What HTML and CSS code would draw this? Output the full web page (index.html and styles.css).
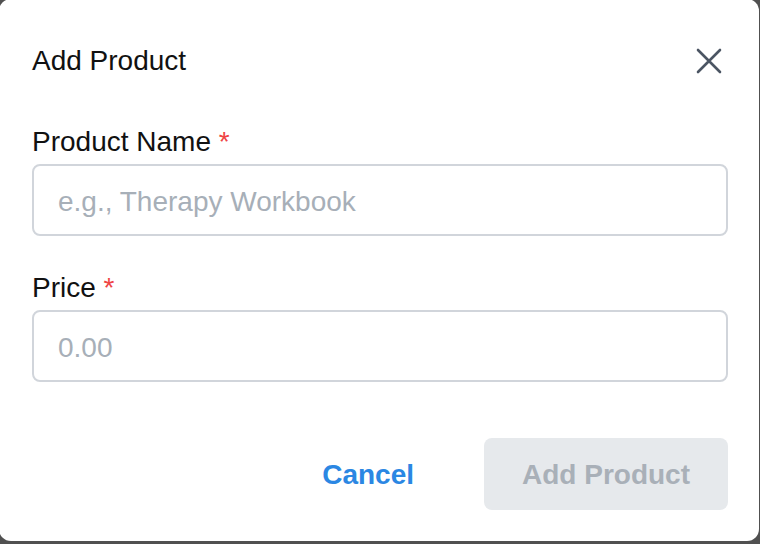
FILE: index.html
```html
<!DOCTYPE html>
<html lang="en">
<head>
<meta charset="utf-8">
<title>Add Product</title>
<link rel="stylesheet" href="styles.css">
</head>
<body>
<div class="modal">
  <div class="modal-header">
    <h2 class="modal-title">Add Product</h2>
    <button class="close-btn" type="button" aria-label="Close">
      <svg width="26" height="26" viewBox="0 0 26 26" fill="none" stroke="#4b5563" stroke-width="2.6" stroke-linecap="round">
        <path d="M2 2 L24 24 M24 2 L2 24"/>
      </svg>
    </button>
  </div>
  <div class="field">
    <label class="field-label">Product Name <span class="req">*</span></label>
    <input class="field-input" type="text" placeholder="e.g., Therapy Workbook">
  </div>
  <div class="field field-second">
    <label class="field-label">Price <span class="req">*</span></label>
    <input class="field-input" type="text" placeholder="0.00">
  </div>
  <div class="actions">
    <button class="btn-cancel" type="button">Cancel</button>
    <button class="btn-submit" type="button" disabled>Add Product</button>
  </div>
</div>
</body>
</html>
```

FILE: styles.css
```css
* { box-sizing: border-box; }
html, body {
  margin: 0;
  padding: 0;
  width: 760px;
  height: 544px;
  overflow: hidden;
  background: #505050;
  font-family: "Liberation Sans", Arial, sans-serif;
}
.modal {
  width: 760px;
  margin: -1px 0 0 -1px;
  background: #ffffff;
  border-radius: 12px;
  padding: 42px 31px 31px 33px;
}
.modal-header {
  display: flex;
  align-items: center;
  justify-content: space-between;
  height: 40px;
}
.modal-title {
  margin: 0;
  font-size: 28px;
  font-weight: 400;
  line-height: 40px;
  color: #111111;
}
.close-btn {
  border: 0;
  background: transparent;
  padding: 6px;
  display: flex;
  cursor: pointer;
}
.field {
  display: flex;
  flex-direction: column;
  margin-top: 38px;
}
.field-second { margin-top: 29px; }
.field-label {
  font-size: 28px;
  line-height: 40px;
  color: #111111;
  padding-top: 3px;
  margin-bottom: 2px;
}
.req { color: #ef4444; }
.field-input {
  height: 72px;
  border: 2px solid #d1d5db;
  border-radius: 8px;
  padding: 4px 24px 0;
  font-family: inherit;
  font-size: 28px;
  color: #111111;
  background: #ffffff;
  outline: none;
}
.field-input::placeholder { color: #a7afb8; }
.actions {
  display: flex;
  justify-content: flex-end;
  align-items: center;
  gap: 46px;
  margin-top: 56px;
}
.btn-cancel {
  border: 0;
  background: transparent;
  padding: 2px 24px 0;
  height: 72px;
  font-family: inherit;
  font-size: 28px;
  font-weight: 700;
  color: #2b87e3;
}
.btn-submit {
  border: 0;
  height: 72px;
  width: 244px;
  border-radius: 8px;
  padding-top: 2px;
  background: #e6e9ec;
  font-family: inherit;
  font-size: 28px;
  font-weight: 700;
  color: #a9b0b8;
}
```
